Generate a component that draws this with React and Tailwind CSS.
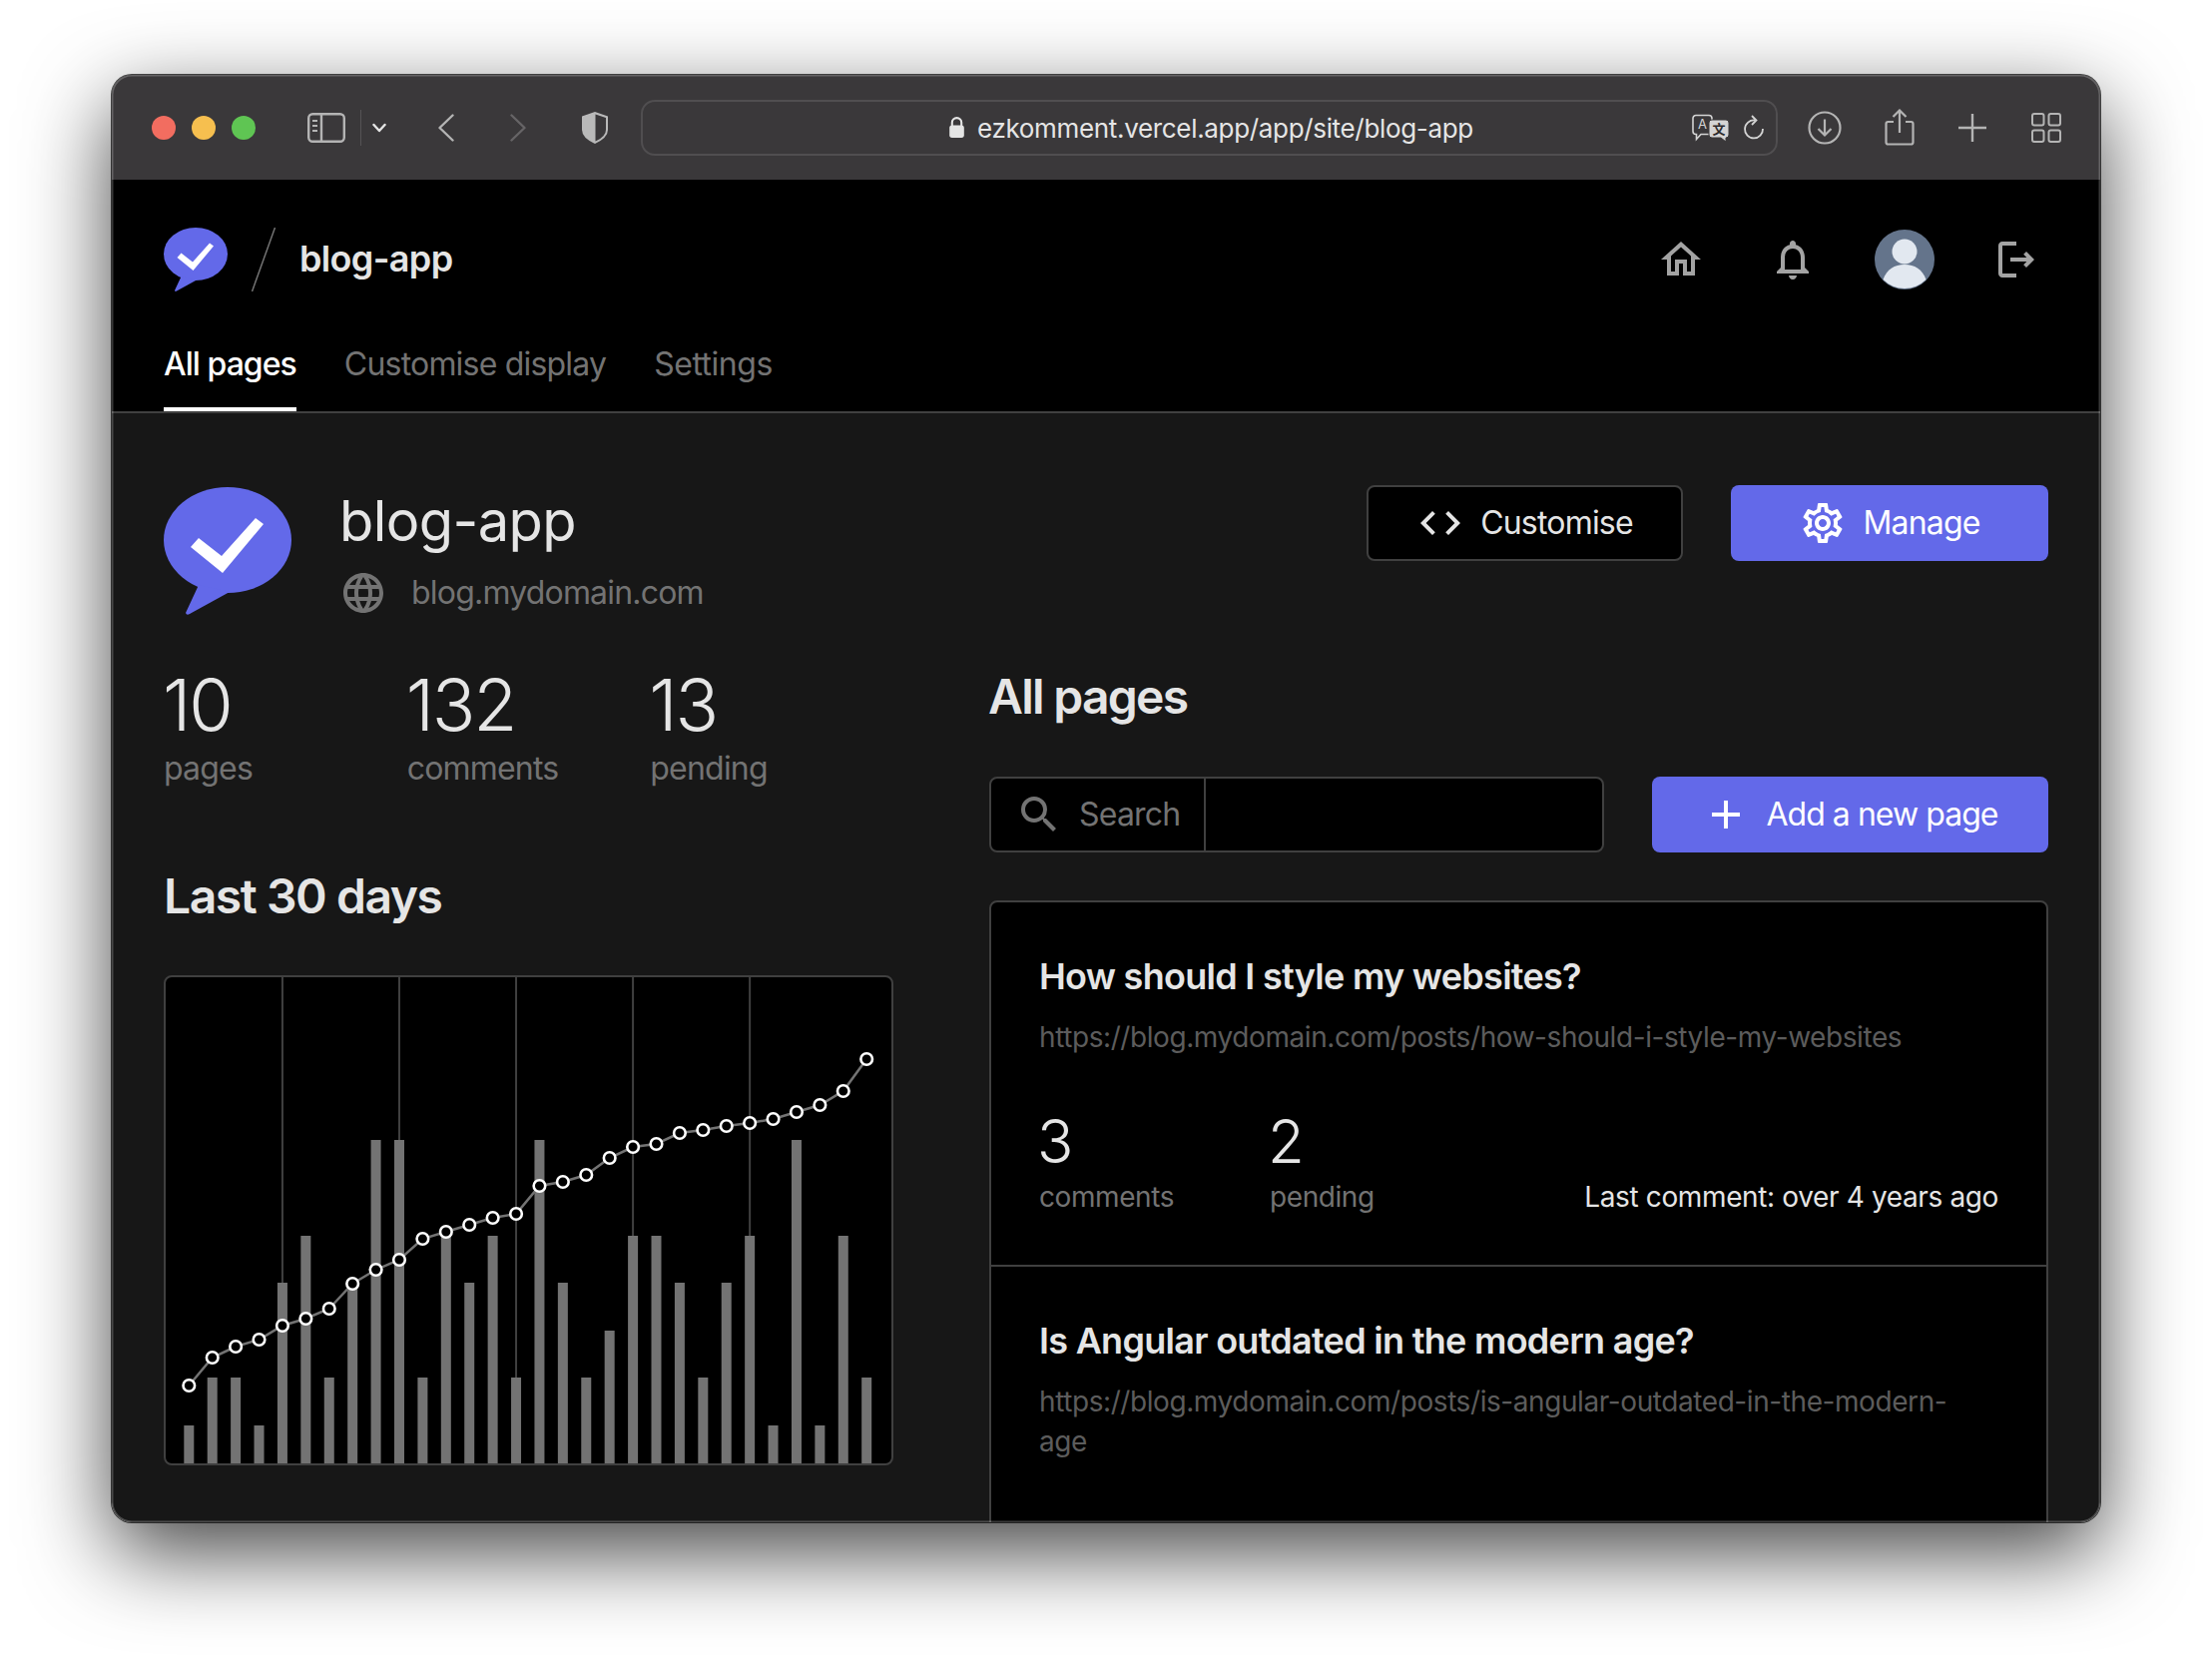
import React from "react";
import {
  MdOutlineHome,
  MdOutlineNotifications,
  MdOutlineLogout,
  MdOutlineSettings,
  MdOutlineCode,
  MdOutlineLanguage,
  MdOutlineSearch,
  MdOutlineAdd,
} from "react-icons/md";

const BARS = [1, 2, 2, 1, 4, 5, 2, 4, 7, 7, 2, 5, 4, 5, 2, 7, 4, 2, 3, 5, 5, 4, 2, 4, 5, 1, 7, 1, 5, 2];
const BAR_TOPS = [1467, 1428, 1380, 1333, 1285, 1238, 1190, 1142];
// y of each point in the page
const DOTS = [
  1388, 1360, 1349, 1342, 1328, 1321, 1311, 1286, 1272, 1262, 1241, 1234, 1227, 1220, 1216, 1188, 1184, 1177, 1160,
  1149, 1146, 1135, 1132, 1128, 1125, 1121, 1114, 1107, 1093, 1061,
];
const GRID_LINES = [4, 9, 14, 19, 24];

const barX = (i) => 189.3 + 23.41 * i - 166;

function Logo({ className }) {
  return (
    <svg viewBox="0 0 128 128" className={className}>
      <ellipse cx="64" cy="53" rx="64" ry="53" fill="#6369e9" />
      <path d="M35 98 L22 126 Q23 129 26 127 L66 105 Z" fill="#6369e9" />
      <path d="M27 60 L59 86 L100 37 L92 31 L58 69 L35 51 Z" fill="#fff" />
    </svg>
  );
}

function TranslateIcon() {
  return (
    <svg viewBox="0 0 38 28" className="h-[28px] w-[38px] shrink-0">
      <path
        d="M4 1.5h13a3 3 0 0 1 3 3v13a3 3 0 0 1-3 3H9l-4.5 5v-5H4a3 3 0 0 1-3-3v-13a3 3 0 0 1 3-3z"
        fill="#3a383a"
        stroke="#d4d4d4"
        strokeWidth="1.6"
      />
      <text x="10.5" y="15" textAnchor="middle" fontSize="13" fill="#d4d4d4" fontFamily="Inter, sans-serif">
        A
      </text>
      <path
        d="M20 6h14a3 3 0 0 1 3 3v12a3 3 0 0 1-3 3v4l-5-4h-9a3 3 0 0 1-3-3V9a3 3 0 0 1 3-3z"
        fill="#d4d4d4"
        stroke="#3a383a"
        strokeWidth="1"
      />
      <text
        x="27"
        y="20"
        textAnchor="middle"
        fontSize="13"
        fontWeight="700"
        fill="#2c2a2c"
        fontFamily="'Noto Sans CJK SC', sans-serif"
      >
        文
      </text>
    </svg>
  );
}

function Toolbar() {
  return (
    <div className="flex h-[105px] shrink-0 items-center bg-[#3a383a] pl-[40px] pr-[39px]">
      {/* traffic lights */}
      <div className="flex gap-[16px]">
        <span className="h-[24px] w-[24px] rounded-full bg-[#f26d60]" />
        <span className="h-[24px] w-[24px] rounded-full bg-[#f6bf4f]" />
        <span className="h-[24px] w-[24px] rounded-full bg-[#5fc553]" />
      </div>
      <svg viewBox="0 0 38 30" className="ml-[52px] h-[30px] w-[38px] shrink-0" fill="none" stroke="#b4b4b4">
        <rect x="1.2" y="1.2" width="35.6" height="27.6" rx="4" strokeWidth="2.4" />
        <path d="M14 1v28" strokeWidth="2.4" />
        <path d="M5 8h5M5 13h5M5 18h5" strokeWidth="1.8" />
      </svg>
      <span className="ml-[15px] h-[36px] w-[1px] shrink-0 bg-[#555355]" />
      <svg viewBox="0 0 14 10" className="ml-[11px] h-[10px] w-[14px] shrink-0" fill="none" stroke="#e5e5e5">
        <path d="M1.5 2 L7 8 L12.5 2" strokeWidth="2.4" strokeLinecap="round" strokeLinejoin="round" />
      </svg>
      <svg viewBox="0 0 16 28" className="ml-[52px] h-[28px] w-[16px] shrink-0" fill="none" stroke="#b4b4b4">
        <path d="M14.5 1.5 L1.5 14 L14.5 26.5" strokeWidth="2.4" strokeLinecap="round" strokeLinejoin="round" />
      </svg>
      <svg viewBox="0 0 16 28" className="ml-[56px] h-[28px] w-[16px] shrink-0" fill="none" stroke="#666466">
        <path d="M1.5 1.5 L14.5 14 L1.5 26.5" strokeWidth="2.4" strokeLinecap="round" strokeLinejoin="round" />
      </svg>
      <svg viewBox="0 0 28 34" className="ml-[55px] h-[34px] w-[28px] shrink-0">
        <path d="M14 1 L27 5.5 V19 Q27 27 14 33 Q1 27 1 19 V5.5 Z" fill="#b9b9b9" />
        <path d="M14.5 3.5 L25 7 V19 Q25 26 14.5 30.5 Z" fill="#3a383a" />
      </svg>
      {/* address bar */}
      <div className="ml-[32px] flex h-[56px] flex-1 items-center rounded-[14px] border-2 border-[#504e50] pl-[306px] pr-[11px]">
        <svg viewBox="0 0 16 22" className="h-[23px] w-[17px] shrink-0" fill="none">
          <path d="M3.5 10V6.5a4.5 4.5 0 0 1 9 0V10" stroke="#e5e5e5" strokeWidth="2" />
          <rect x="1" y="9" width="14" height="12" rx="2.5" fill="#e5e5e5" />
        </svg>
        <span className="ml-[12px] pt-[2px] text-[26px] leading-[36px] tracking-[-0.33px] text-[#e5e5e5]">
          ezkomment.vercel.app/app/site/blog-app
        </span>
        <span className="flex-1" />
        <TranslateIcon />
        <svg viewBox="0 0 22 26" className="ml-[13px] h-[26px] w-[22px] shrink-0" fill="none" stroke="#d4d4d4">
          <path d="M12 5.5 A9 9 0 1 0 20 14" strokeWidth="1.8" />
          <path d="M9 1 L13.5 5.5 L9 10" strokeWidth="1.8" />
        </svg>
      </div>
      <svg viewBox="0 0 34 34" className="ml-[30px] h-[34px] w-[34px] shrink-0" fill="none" stroke="#b4b4b4">
        <circle cx="17" cy="17" r="15.5" strokeWidth="2.2" />
        <path d="M17 8.5v16M10.5 18 L17 24.5 L23.5 18" strokeWidth="2.2" />
      </svg>
      <svg viewBox="0 0 30 37" className="ml-[43px] h-[37px] w-[30px] shrink-0" fill="none" stroke="#b4b4b4">
        <path d="M9 13H3.5a2 2 0 0 0-2 2v18.5a2 2 0 0 0 2 2h23a2 2 0 0 0 2-2V15a2 2 0 0 0-2-2H21" strokeWidth="2.2" />
        <path d="M15 24V2M8.5 8 L15 1.5 L21.5 8" strokeWidth="2.2" />
      </svg>
      <svg viewBox="0 0 28 28" className="ml-[44px] h-[28px] w-[28px] shrink-0" fill="none" stroke="#b4b4b4">
        <path d="M14 0v28M0 14h28" strokeWidth="2.4" />
      </svg>
      <svg viewBox="0 0 30 30" className="ml-[45px] h-[30px] w-[30px] shrink-0" fill="none" stroke="#b4b4b4">
        <rect x="1" y="1" width="11.5" height="11.5" rx="2" strokeWidth="2" />
        <rect x="17.5" y="1" width="11.5" height="11.5" rx="2" strokeWidth="2" />
        <rect x="1" y="17.5" width="11.5" height="11.5" rx="2" strokeWidth="2" />
        <rect x="17.5" y="17.5" width="11.5" height="11.5" rx="2" strokeWidth="2" />
      </svg>
    </div>
  );
}

function AppHeader() {
  return (
    <header className="shrink-0 border-b-2 border-[#404040] bg-black px-[52px] pt-[48px]">
      <div className="flex items-center">
        <Logo className="h-[64px] w-[64px]" />
        <svg viewBox="0 0 24 64" className="ml-[24px] h-[64px] w-[24px]" fill="none" stroke="#737373">
          <path d="M23.5 0 L0.5 64" strokeWidth="1.5" />
        </svg>
        <span className="mb-[2px] ml-[24px] text-[36px] font-semibold leading-[48px] tracking-[-0.018em] text-[#e5e5e5]">
          blog-app
        </span>
        <div className="ml-auto flex items-center gap-[48px] text-[#a3a3a3]">
          <span className="p-2">
            <MdOutlineHome size={48} />
          </span>
          <span className="p-2">
            <MdOutlineNotifications size={48} />
          </span>
          <svg viewBox="0 0 60 60" className="mx-[2px] h-[60px] w-[60px]">
            <circle cx="30" cy="30" r="30" fill="#64748b" />
            <circle cx="30" cy="22" r="12.5" fill="#e2e8f0" />
            <path d="M8.5 50 C12 40 20 35 30 35 C40 35 48 40 51.5 50 A30 30 0 0 1 8.5 50 Z" fill="#e2e8f0" />
          </svg>
          <span className="p-2">
            <MdOutlineLogout size={48} />
          </span>
        </div>
      </div>
      <nav className="mt-[49px] flex gap-[48px] text-[32px] font-medium leading-[48px]">
        <span className="border-b-4 border-white pb-[19px] tracking-[-0.03em] text-white">All pages</span>
        <span className="pb-[23px] font-normal tracking-[-0.025em] text-[#737373]">Customise display</span>
        <span className="pb-[23px] font-normal tracking-[-0.015em] text-[#737373]">Settings</span>
      </nav>
    </header>
  );
}

function Stat({ value, label }) {
  return (
    <div>
      <div className="-ml-[1px] text-[72px] font-light leading-[72px] tracking-[-0.03em] text-[#e5e5e5]">{value}</div>
      <div className="mt-[4px] text-[32px] leading-[48px] tracking-[-0.025em] text-[#737373]">{label}</div>
    </div>
  );
}

function ActivityChart() {
  return (
    <div className="h-[491px] overflow-hidden rounded-lg border-2 border-[#404040] bg-black">
      <svg viewBox="0 0 727 488" className="block h-[488px] w-[727px]">
        {GRID_LINES.map((i) => (
          <line key={i} x1={barX(i)} x2={barX(i)} y1="0" y2="488" stroke="#404040" strokeWidth="2" />
        ))}
        {BARS.map((level, i) => (
          <rect
            key={i}
            x={barX(i) - 5}
            y={BAR_TOPS[level] - 979}
            width="10"
            height={1489 - BAR_TOPS[level]}
            fill="#737373"
          />
        ))}
        <polyline
          points={DOTS.map((y, i) => `${barX(i)},${y - 979}`).join(" ")}
          fill="none"
          stroke="#737373"
          strokeWidth="2.5"
        />
        {DOTS.map((y, i) => (
          <circle key={i} cx={barX(i)} cy={y - 979} r="5.8" fill="#000" stroke="#fff" strokeWidth="2.6" />
        ))}
      </svg>
    </div>
  );
}

function PageItem({ title, url, stats }) {
  return (
    <li className="border-b-2 border-[#404040] px-[48px] pb-[48px] pt-[50px] last:border-b-0">
      <h3 className="text-[36px] font-semibold leading-[48px] tracking-[-0.02em] text-[#e5e5e5]">{title}</h3>
      <p className="mt-[17px] max-w-[940px] text-[28px] leading-[40px] tracking-[-0.015em] text-[#5c5c5c]">{url}</p>
      {stats && (
        <div className="mt-[48px] flex items-end">
          <div className="flex gap-[96px]">
            <div>
              <div className="-ml-[2px] text-[60px] font-light leading-[72px] text-[#e5e5e5]">{stats.comments}</div>
              <div className="text-[28px] leading-[40px] tracking-[-0.015em] text-[#737373]">comments</div>
            </div>
            <div>
              <div className="-ml-[2px] text-[60px] font-light leading-[72px] text-[#e5e5e5]">{stats.pending}</div>
              <div className="text-[28px] leading-[40px] tracking-[-0.015em] text-[#737373]">pending</div>
            </div>
          </div>
          <div className="ml-auto text-[28px] leading-[40px] tracking-[-0.013em] text-[#e5e5e5]">{stats.lastComment}</div>
        </div>
      )}
    </li>
  );
}

export default function App() {
  return (
    <div className="h-[1674px] overflow-hidden bg-white pl-[112px] pt-[75px] font-['Inter',sans-serif]">
      <div className="relative h-[1450px] w-[1992px] rounded-[20px] shadow-[0_0_0_1px_rgba(0,0,0,0.7),0_30px_86px_rgba(0,0,0,0.74)]">
        <div className="flex h-full flex-col overflow-hidden rounded-[20px] bg-[#171717]">
          <Toolbar />
          <AppHeader />
          <main className="min-h-0 flex-1 px-[52px] pt-[72px]">
            {/* site heading */}
            <div className="flex items-start">
              <Logo className="mt-[2px] h-[128px] w-[128px]" />
              <div className="ml-[48px]">
                <h1 className="pt-[1px] text-[56px] leading-[71px] tracking-[-0.01em] text-[#e5e5e5]">blog-app</h1>
                <div className="mt-[12px] flex items-center gap-[24px] text-[32px] leading-[48px] tracking-[-0.025em] text-[#737373]">
                  <MdOutlineLanguage size={48} />
                  blog.mydomain.com
                </div>
              </div>
              <div className="ml-auto flex gap-[48px] text-[32px] tracking-[-0.025em]">
                <button className="flex h-[76px] w-[317px] items-center justify-center gap-[16px] rounded-lg border-2 border-[#404040] bg-black text-[#e5e5e5]">
                  <MdOutlineCode size={48} />
                  Customise
                </button>
                <button className="flex h-[76px] w-[318px] items-center justify-center gap-[16px] rounded-lg bg-[#6369e9] text-white">
                  <MdOutlineSettings size={48} />
                  Manage
                </button>
              </div>
            </div>

            <div className="mt-[44px] flex gap-[96px]">
              {/* stats and chart */}
              <section className="w-[731px] shrink-0 pt-[8px]">
                <div className="grid grid-cols-3">
                  <Stat value="10" label="pages" />
                  <Stat value="132" label="comments" />
                  <Stat value="13" label="pending" />
                </div>
                <h2 className="mt-[68px] text-[48px] font-semibold leading-[72px] tracking-[-0.03em] text-[#e5e5e5]">
                  Last 30 days
                </h2>
                <div className="mt-[43px]">
                  <ActivityChart />
                </div>
              </section>

              {/* page list */}
              <section className="min-w-0 flex-1">
                <h2 className="-ml-[1px] text-[48px] font-semibold leading-[72px] tracking-[-0.036em] text-[#e5e5e5]">All pages</h2>
                <div className="mt-[44px] flex gap-[48px] text-[32px] tracking-[-0.025em]">
                  <div className="flex h-[76px] flex-1 overflow-hidden rounded-lg border-2 border-[#404040] bg-black">
                    <div className="flex items-center gap-[16px] border-r-2 border-[#404040] px-[24px] text-[#737373]">
                      <MdOutlineSearch size={48} />
                      Search
                    </div>
                  </div>
                  <button className="flex h-[76px] w-[397px] items-center justify-center gap-[16px] rounded-lg bg-[#6369e9] tracking-[-0.03em] text-white">
                    <MdOutlineAdd size={48} />
                    Add a new page
                  </button>
                </div>
                <ul className="mt-[48px] h-[660px] rounded-t-lg border-2 border-[#404040] bg-black">
                  <PageItem
                    title="How should I style my websites?"
                    url="https://blog.mydomain.com/posts/how-should-i-style-my-websites"
                    stats={{ comments: "3", pending: "2", lastComment: "Last comment: over 4 years ago" }}
                  />
                  <PageItem
                    title="Is Angular outdated in the modern age?"
                    url="https://blog.mydomain.com/posts/is-angular-outdated-in-the-modern-age"
                  />
                </ul>
              </section>
            </div>
          </main>
        </div>
        <div className="pointer-events-none absolute inset-0 rounded-[20px] shadow-[inset_0_0_0_1.5px_rgba(255,255,255,0.22)]" />
      </div>
    </div>
  );
}
